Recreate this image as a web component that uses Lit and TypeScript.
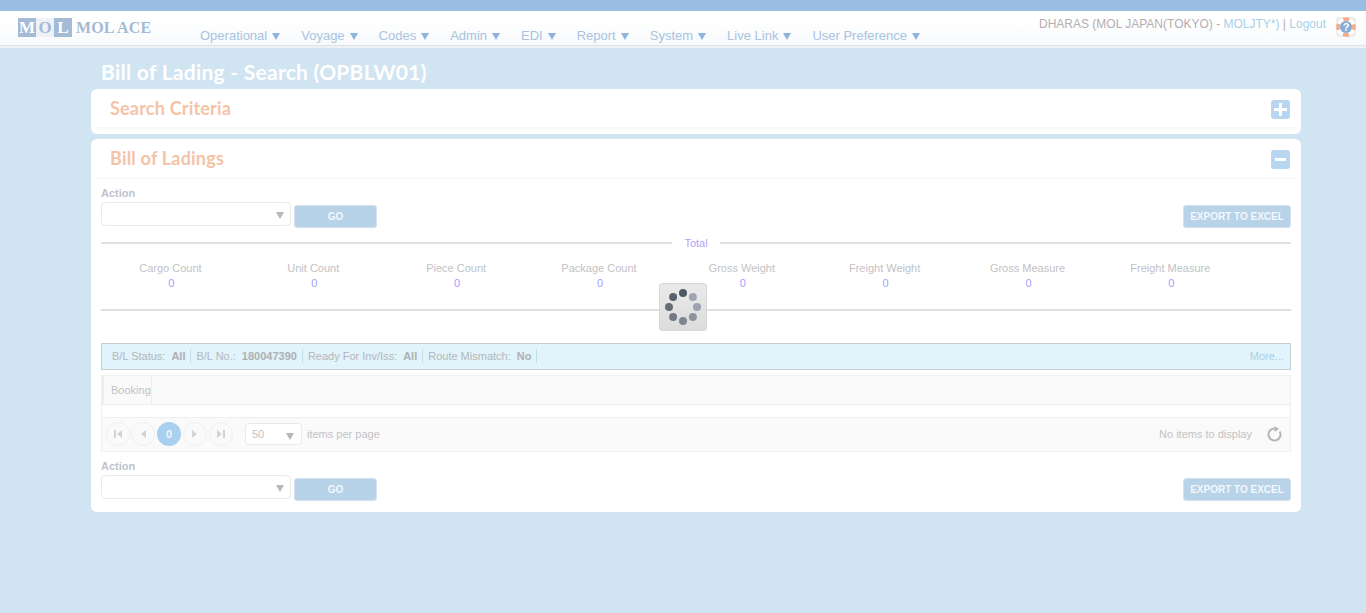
import {LitElement, html, css, svg} from 'lit';
import {customElement} from 'lit/decorators.js';

const MENU = ['Operational', 'Voyage', 'Codes', 'Admin', 'EDI', 'Report', 'System', 'Live Link', 'User Preference'];
const STATS = ['Cargo Count', 'Unit Count', 'Piece Count', 'Package Count', 'Gross Weight', 'Freight Weight', 'Gross Measure', 'Freight Measure'];
const FILTERS = [['B/L Status:', 'All'], ['B/L No.:', '180047390'], ['Ready For Inv/Iss:', 'All'], ['Route Mismatch:', 'No']];
// clockwise from 12 o'clock
const DOTS = ['#4f5866', '#a0a6b3', '#9ca2af', '#8d939f', '#7f8591', '#737985', '#666c78', '#5a616e'];

function svgDot(x: number, y: number, c: string) {
    return svg`<circle cx=${x} cy=${y} r="4" fill=${c}></circle>`;
}

@customElement('app-root')
class AppRoot extends LitElement {
    actionRow() {
        return html`
            <div class="action-label">Action</div>
            <div class="action-row">
                <div class="select"><span class="caret"></span></div>
                <button class="btn go">GO</button>
                <button class="btn export">EXPORT TO EXCEL</button>
            </div>
        `;
    }

    spinner() {
        return html`
            <div class="spinner">
                <svg width="36" height="36" viewBox="0 0 36 36">
                    ${DOTS.map((c, i) => {
                        const a = (i * Math.PI) / 4;
                        return svgDot(18 + 14 * Math.sin(a), 18 - 14 * Math.cos(a), c);
                    })}
                </svg>
            </div>
        `;
    }

    render() {
        return html`
            <div class="topbar"></div>
            <header>
                <div class="logo">
                    <span class="sq dark">M</span><span class="sq light">O</span><span class="sq dark">L</span>
                    <span class="logo-name">MOL ACE</span>
                </div>
                <nav>
                    ${MENU.map((m) => html`<a>${m}<i></i></a>`)}
                </nav>
                <div class="user">
                    <span>DHARAS (MOL JAPAN(TOKYO) - <b>MOLJTY*)</b> | <b>Logout</b></span>
                    <svg class="help" width="20" height="20" viewBox="0 0 20 20">
                        <rect width="20" height="20" rx="4" fill="#ececec"/>
                        <circle cx="10" cy="10" r="8" fill="none" stroke="#fdfdfd" stroke-width="3.6"/>
                        <circle cx="10" cy="10" r="8" fill="none" stroke="#f4a88c" stroke-width="3.6" stroke-dasharray="6 6.57" stroke-dashoffset="3"/>
                        <circle cx="10" cy="10" r="6" fill="#86acd6"/>
                        <text x="10" y="13.5" text-anchor="middle" class="q">?</text>
                    </svg>
                </div>
            </header>
            <main>
                <h1>Bill of Lading - Search (OPBLW01)</h1>
                <section class="card first">
                    <div class="card-head">
                        <h2>Search Criteria</h2>
                        <span class="toggle"><svg width="13" height="13" viewBox="0 0 13 13"><path d="M5 0h3v5h5v3H8v5H5V8H0V5h5z" fill="#fff"/></svg></span>
                    </div>
                </section>
                <section class="card second">
                    <div class="card-head">
                        <h2>Bill of Ladings</h2>
                        <span class="toggle"><svg width="13" height="13" viewBox="0 0 13 13"><path d="M1 5h11v3H1z" fill="#fff"/></svg></span>
                    </div>
                    <div class="body">
                        ${this.actionRow()}
                        <div class="total"><span>Total</span></div>
                        <div class="stats">
                            ${STATS.map((s) => html`<div class="stat"><div>${s}</div><b>0</b></div>`)}
                        </div>
                        <div class="rule"></div>
                        ${this.spinner()}
                        <div class="filters">
                            ${FILTERS.map(([k, v]) => html`<span class="filter">${k}<b>${v}</b></span>`)}
                            <a class="more">More...</a>
                        </div>
                        <div class="grid">
                            <div class="grid-head"><span>Booking</span></div>
                            <div class="grid-empty"></div>
                            <div class="pager">
                                <span class="pg"><svg width="10" height="10" viewBox="0 0 10 10"><path d="M1 1h2v8H1zM9 1v8L4 5z" fill="#d3d3d3"/></svg></span>
                                <span class="pg prev"><svg width="10" height="10" viewBox="0 0 10 10"><path d="M8 1v8L3 5z" fill="#d3d3d3"/></svg></span>
                                <span class="pg current">0</span>
                                <span class="pg"><svg width="10" height="10" viewBox="0 0 10 10"><path d="M2 1v8l5-4z" fill="#d3d3d3"/></svg></span>
                                <span class="pg"><svg width="10" height="10" viewBox="0 0 10 10"><path d="M1 1v8l5-4zM7 1h2v8H7z" fill="#d3d3d3"/></svg></span>
                                <div class="size"><span>50</span><span class="caret"></span></div>
                                <span class="per">items per page</span>
                                <span class="none">No items to display</span>
                                <svg class="refresh" width="16" height="16" viewBox="0 0 16 16">
                                    <path d="M12.7 5.5A6 6 0 1 1 7.5 2.5" fill="none" stroke="#b5b5b8" stroke-width="2"/>
                                    <path d="M7.5 0l4.5 3-4.5 3z" fill="#b5b5b8"/>
                                </svg>
                            </div>
                        </div>
                        <div class="bottom">${this.actionRow()}</div>
                    </div>
                </section>
            </main>
        `;
    }

    static styles = css`
      :host {
        display: block;
        min-height: 613px;
        background-color: #d1e4f2;
        font-family: "Liberation Sans", Arial, sans-serif;
        overflow: hidden;
      }

      .topbar {
        height: 11px;
        background-color: #9abee3;
      }

      header {
        height: 34px;
        display: flex;
        background: linear-gradient(#ffffff 30%, #f7f9fc);
        border-bottom: 1px solid #dfe3e6;
        box-shadow: 0 2px 0 #edf1f3;
        position: relative;
      }

      .logo {
        display: flex;
        align-items: center;
        height: 19px;
        margin: 7px 0 0 18px;
        width: 182px;
        font-family: "Liberation Serif", serif;
        font-weight: bold;
      }

      .sq {
        width: 18px;
        height: 19px;
        line-height: 19px;
        text-align: center;
        font-size: 17px;
        color: #fff;
      }

      .sq.dark {
        background-color: #a5bad5;
      }

      .sq.light {
        background-color: #eef2f8;
        color: #a5bad5;
      }

      .logo-name {
        margin-left: 4px;
        font-size: 16px;
        letter-spacing: 0.15px;
        color: #a5bad5;
      }

      nav {
        display: flex;
        gap: 21px;
        padding-top: 15px;
        font-size: 13px;
        line-height: 16px;
        color: #a8c4e0;
      }

      nav a {
        display: flex;
        align-items: center;
        white-space: nowrap;
      }

      nav i {
        width: 0;
        height: 0;
        margin: 1px 0 0 5px;
        border-left: 4px solid transparent;
        border-right: 4px solid transparent;
        border-top: 7px solid #8fb4dc;
      }

      .user {
        margin-left: auto;
        display: flex;
        align-items: flex-start;
        padding: 5px 10px 0 0;
        font-size: 12px;
        line-height: 15px;
        color: #b4aeb0;
      }

      .user span {
        padding-top: 1px;
      }

      .user b {
        font-weight: normal;
        color: #a9d0e6;
      }

      .help {
        margin: 1px 0 0 10px;
      }

      .q {
        font-size: 11px;
        font-weight: bold;
        fill: #fff;
      }

      main {
        padding: 14px 65px 0 91px;
      }

      h1 {
        margin: 0 0 0 10px;
        height: 29px;
        font: bold 21px/24px Lato, "Open Sans", sans-serif;
        letter-spacing: 0.26px;
        color: #fff;
      }

      .card {
        background-color: #fff;
        border-radius: 6px;
        position: relative;
      }

      .card.first {
        height: 45px;
        margin-bottom: 5px;
      }

      .card.second {
        height: 373px;
      }

      .card-head {
        display: flex;
        justify-content: space-between;
        align-items: center;
        height: 38px;
        margin: 0 5px;
        padding: 0 6px 0 14px;
        border-bottom: 2px solid #f8f8f8;
      }

      h2 {
        margin: 0;
        font: bold 18px/24px Lato, "Open Sans", sans-serif;
        letter-spacing: 0.2px;
        color: #f4c3a8;
      }

      .toggle {
        width: 19px;
        height: 19px;
        margin-top: 3px;
        border-radius: 3px;
        background-color: #b9d6f0;
        display: flex;
        align-items: center;
        justify-content: center;
      }

      .body {
        padding: 7px 10px 0;
        position: relative;
      }

      .action-label {
        height: 16px;
        font-size: 11px;
        line-height: 14px;
        font-weight: bold;
        color: #bec3cc;
      }

      .action-row {
        display: flex;
        align-items: flex-start;
        height: 26px;
      }

      .select {
        width: 190px;
        height: 24px;
        box-sizing: border-box;
        border: 1px solid #eaeaea;
        border-radius: 4px;
        position: relative;
      }

      .caret {
        position: absolute;
        right: 6px;
        top: 9px;
        border-left: 4px solid transparent;
        border-right: 4px solid transparent;
        border-top: 7px solid #b8b8b8;
      }

      .btn {
        height: 23px;
        margin-top: 3px;
        padding: 0;
        box-sizing: border-box;
        border: 1px solid #d5e2ee;
        border-radius: 3px;
        background-color: #b8d2e8;
        color: #f2f8fc;
        font: bold 10px "Liberation Sans", Arial, sans-serif;
      }

      .go {
        width: 83px;
        margin-left: 3px;
      }

      .export {
        width: 108px;
        margin-left: auto;
      }

      .total {
        display: flex;
        align-items: center;
        height: 16px;
        margin-top: 7px;
        font-size: 11px;
        color: #b3a3f5;
      }

      .total::before, .total::after {
        content: '';
        flex: 1;
        height: 2px;
        background-color: #e0e0e0;
      }

      .total span {
        width: 48px;
        text-align: center;
      }

      .stats {
        display: grid;
        grid-template-columns: repeat(8, 142.85px);
        margin: 10px 0 0 -2px;
        font-size: 11px;
        line-height: 15px;
        text-align: center;
        color: #c2c2c6;
      }

      .stat b {
        margin-left: 2px;
        font-weight: normal;
        color: #a5a0fa;
      }

      .rule {
        height: 2px;
        margin-top: 18px;
        background-color: #e0e0e0;
      }

      .spinner {
        position: absolute;
        left: 568px;
        top: 104px;
        width: 48px;
        height: 48px;
        box-sizing: border-box;
        border: 1px solid #d8d8d8;
        border-radius: 3px;
        background: linear-gradient(#eaeaea, #dcdcdc);
        display: flex;
        align-items: center;
        justify-content: center;
      }

      .filters {
        display: flex;
        align-items: center;
        height: 27px;
        margin-top: 32px;
        padding: 0 6px 2px 5px;
        box-sizing: border-box;
        background-color: #e1f3fb;
        border: 1px solid #c6cdd1;
        font-size: 11px;
        color: #b4b7ba;
      }

      .filter {
        padding: 0 5px;
        line-height: 14px;
        border-right: 1px solid #c2dcec;
      }

      .filter b {
        margin-left: 6px;
        color: #adb0b2;
      }

      .more {
        margin-left: auto;
        font-size: 11px;
        color: #a9d0e6;
      }

      .grid {
        margin-top: 5px;
        border: 1px solid #f0f0f0;
        font-size: 11px;
        color: #c2c2c6;
      }

      .grid-head {
        height: 28px;
        display: flex;
        background-color: #fafafa;
        border-bottom: 1px solid #eeeeee;
      }

      .grid-head span {
        width: 50px;
        line-height: 28px;
        box-sizing: border-box;
        padding-left: 7px;
        border-left: 2px solid #eeeeee;
        border-right: 1px solid #eeeeee;
      }

      .grid-empty {
        height: 12px;
        border-bottom: 1px solid #eeeeee;
      }

      .pager {
        height: 31px;
        display: flex;
        align-items: center;
        gap: 2px;
        padding: 0 7px 2px 4px;
        background-color: #fafafa;
      }

      .pg {
        width: 24px;
        height: 24px;
        box-sizing: border-box;
        border: 1px solid #f0f0f0;
        border-radius: 50%;
        display: flex;
        align-items: center;
        justify-content: center;
      }

      .pg.prev {
        margin-left: -1px;
      }

      .pg.current {
        border: none;
        background-color: #a9d0ef;
        color: #f0f7fc;
        font-weight: bold;
      }

      .size {
        width: 57px;
        height: 22px;
        box-sizing: border-box;
        margin-left: 10px;
        padding-left: 6px;
        line-height: 20px;
        border: 1px solid #eaeaea;
        border-radius: 4px;
        background-color: #fff;
        position: relative;
      }

      .size .caret {
        top: 9px;
        right: 7px;
      }

      .per {
        margin-left: 3px;
      }

      .none {
        margin-left: auto;
        margin-right: 13px;
      }

      .bottom {
        margin-top: 7px;
      }
    `;
}
